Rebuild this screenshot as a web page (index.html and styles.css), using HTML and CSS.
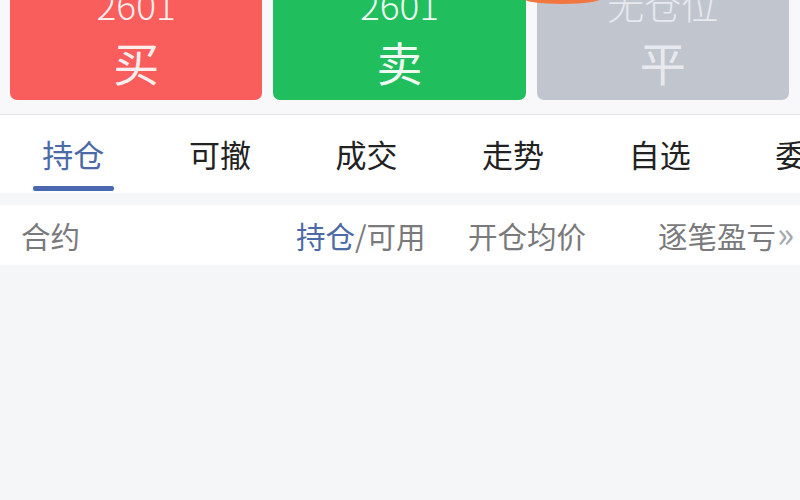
FILE: index.html
```html
<!DOCTYPE html>
<html lang="zh">
<head>
<meta charset="utf-8">
<link rel="stylesheet" href="styles.css">
</head>
<body>
<div class="page">
  <div class="actions">
    <div class="btn buy"><span class="price">2601</span><span class="label">买</span></div>
    <div class="btn sell"><span class="price">2601</span><span class="label">卖</span></div>
    <div class="btn flat"><span class="price">无仓位</span><span class="label">平</span></div>
    <div class="mark"></div>
  </div>
  <div class="tabs">
    <div class="tab active">持仓</div>
    <div class="tab">可撤</div>
    <div class="tab">成交</div>
    <div class="tab">走势</div>
    <div class="tab">自选</div>
    <div class="tab">委托</div>
  </div>
  <div class="header">
    <div class="col c1">合约</div>
    <div class="col c2"><span class="hl">持仓</span>/可用</div>
    <div class="col c3">开仓均价</div>
    <div class="col c4">逐笔盈亏<span class="more">»</span></div>
  </div>
  <div class="rest"></div>
</div>
</body>
</html>
```

FILE: styles.css
```css
* { box-sizing: border-box; }
html, body { margin: 0; padding: 0; }
body {
  width: 800px;
  height: 500px;
  overflow: hidden;
  background: #f5f6f8;
  font-family: "Noto Sans CJK SC", "Noto Sans", sans-serif;
}
.page { width: 800px; }
.actions {
  position: relative;
  display: flex;
  gap: 11px;
  padding: 0 11px 0 10px;
  margin-top: -20px;
  height: 135px;
  background: #f8f8fa;
  border-bottom: 1px solid #e4e5e8;
}
.btn {
  flex: 1;
  height: 120px;
  border-radius: 7px;
  display: flex;
  flex-direction: column;
  align-items: center;
  color: #fbeeee;
}
.buy { background: #f95d5c; }
.sell { background: #21be5e; color: #eefaf2; }
.flat { background: #c1c6ce; color: #e7e9ee; }
.price {
  font-size: 37px;
  line-height: 44px;
  margin-top: 2px;
  font-weight: 300;
}
.label {
  font-size: 46px;
  line-height: 54px;
  margin-top: 8px;
}
.mark {
  position: absolute;
  left: 522px;
  top: 12px;
  width: 80px;
  height: 12px;
  border-radius: 50%;
  background: #f2763f;
}
.tabs {
  display: flex;
  background: #fff;
  height: 78px;
}
.tab {
  flex: 0 0 146.6px;
  text-align: center;
  font-size: 31px;
  line-height: 78px;
  color: #222;
  position: relative;
}
.tab.active { color: #4b6aa6; }
.tab.active::after {
  content: "";
  position: absolute;
  left: 33px;
  width: 81px;
  bottom: 2px;
  height: 5px;
  border-radius: 2px;
  background: #4a68b0;
}
.header {
  margin-top: 12px;
  display: flex;
  align-items: center;
  height: 60px;
  background: #fff;
  font-size: 29.5px;
  color: #7a7a7c;
}
.col { white-space: nowrap; }
.c1 { padding-left: 21px; width: 296px; }
.c2 { width: 172px; }
.c3 { width: 190px; }
.more { font-size: 36px; line-height: 30px; color: #a4a8b0; margin-left: 1px; }
.hl { color: #4b6aa6; }
.rest { height: 300px; background: #f5f6f8; }
```
